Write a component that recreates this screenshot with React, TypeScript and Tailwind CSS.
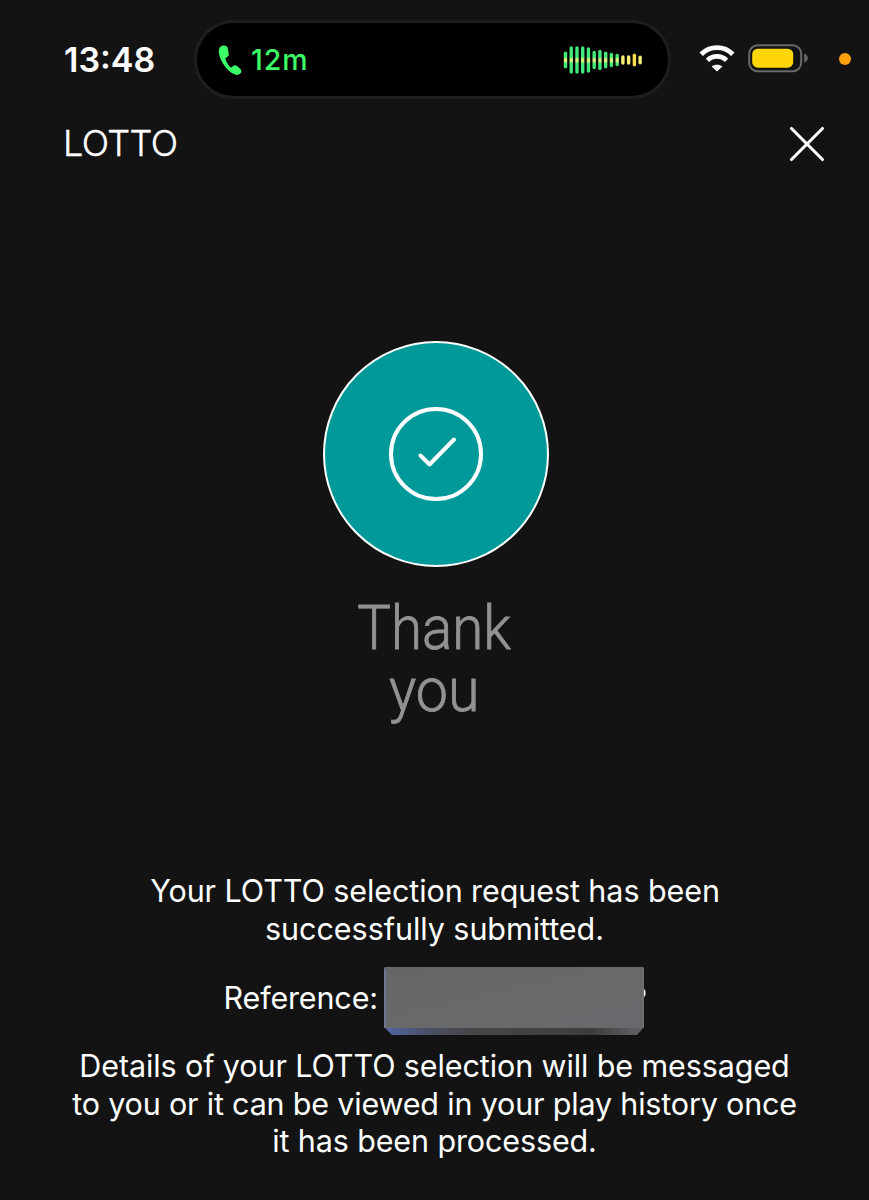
import React from 'react';

const bars = [17, 27.5, 27.5, 27.5, 25.5, 18.5, 20.5, 17, 14.5, 12.5, 9.5, 9.5, 13, 9];

function Waveform() {
  return (
    <svg className="block h-[30px] w-[80px] shrink-0" viewBox="0 0 80 30">
      <defs>
        <linearGradient id="wave" gradientUnits="userSpaceOnUse" x1="0" y1="0" x2="0" y2="30">
          <stop offset="0.41" stopColor="#42e87a" />
          <stop offset="0.46" stopColor="#d2f27c" />
          <stop offset="0.56" stopColor="#d2f27c" />
          <stop offset="0.61" stopColor="#42e87a" />
        </linearGradient>
      </defs>
      {bars.map((h, i) => (
        <rect
          key={i}
          x={0.8 + i * 5.74}
          y={15 - h / 2}
          width={3.4}
          height={h}
          rx={1.7}
          fill={i < 10 ? 'url(#wave)' : i === 12 ? '#f8dc4e' : '#f5ee72'}
        />
      ))}
    </svg>
  );
}

function StatusBar() {
  return (
    <div className="flex h-[118px] items-start">
      <div className="w-[194px] shrink-0 pt-[40px] pl-[64px] text-[34px] leading-[40px] font-semibold whitespace-nowrap">
        13:48
      </div>
      <div className="mt-[20px] flex h-[79px] w-[477px] shrink-0 items-center rounded-full border-[3px] border-[#1e1e1e] bg-black pr-[25px] pl-[21px]">
        <svg className="block h-[32px] w-[24px] shrink-0" viewBox="0 0 24 32">
          <path
            d="M5.9 1.5C2.8 1.4.9 3.8.8 7.1.9 12.2 3.6 18.5 8.2 24c3.6 4.2 7.6 6.8 10.8 6.9 2.3 0 3.8-1.2 4.3-2.8.4-1.2-.1-2.3-1-3.1l-3.3-3c-1.2-1-2.6-1-3.7 0l-1.3 1.1c-.7.6-1.3.6-2-.1-1.8-2-3.5-5-4.4-7.5-.3-.9-.1-1.4.6-1.9l1.4-.9c1.1-.8 1.4-1.8 1.1-3.2L9.8 4.3C9.400 2.400 8.100 1.500 5.900 1.500Z"
            fill="#3cff68"
          />
        </svg>
        <span className="ml-[9px] text-[28.500px] leading-[36px] font-medium tracking-[0.9px] text-[#3cff68]">12m</span>
        <div className="flex-1" />
        <Waveform />
      </div>
      <svg className="mt-[43px] ml-[28px] block h-[30px] w-[37px] shrink-0" viewBox="0 0 37 30" fill="none">
        <path d="M2.200 11.300A22 22 0 0 1 33.800 11.300" stroke="#fff" strokeWidth="4.900" />
        <path d="M8.500 17.400A13.400 13.400 0 0 1 27.500 17.400" stroke="#fff" strokeWidth="4.800" />
        <path d="M18 28.400l-5.400-5C15.600 21.200 20.400 21.200 23.400 23.400Z" fill="#fff" />
      </svg>
      <svg className="mt-[43px] ml-[12px] block h-[30px] w-[61px] shrink-0" viewBox="0 0 61 30">
        <rect x="1.2" y="2.200" width="52" height="26" rx="8.500" fill="none" stroke="#68686b" strokeWidth="2" />
        <rect x="4.200" y="5.700" width="41" height="19" rx="5.500" fill="#ffd60a" />
        <path d="M56.200 10.500c2.200 1 3.600 2.500 3.600 4.500s-1.400 3.700-3.600 4.700Z" fill="#68686b" />
      </svg>
      <div className="mt-[53px] ml-[30px] h-[12px] w-[12px] shrink-0 rounded-full bg-[#ff9f0a]" />
    </div>
  );
}

function Line({ children, className }: { children: React.ReactNode; className: string }) {
  return <span className={`block whitespace-nowrap ${className}`}>{children}</span>;
}

export default function App() {
  return (
    <main className="flex h-[1200px] w-[869px] flex-col overflow-hidden bg-[#131313] font-['Inter',sans-serif] text-white">
      <StatusBar />

      <header className="flex h-[52px] items-center justify-between pr-[44px] pl-[63px]">
        <h1 className="pb-[1px] text-[36px] leading-[51px] font-light tracking-[-0.6px] [-webkit-text-stroke:0.4px_#fff]">LOTTO</h1>
        <button aria-label="Close" className="block">
          <svg className="block h-[36px] w-[36px]" viewBox="0 0 36 36">
            <path d="M2.500 2.500l31 31M33.500 2.500l-31 31" stroke="#fff" strokeWidth="3.100" strokeLinecap="round" />
          </svg>
        </button>
      </header>

      <div className="mt-[170px] flex justify-center pl-[3px]">
        <svg className="block h-[228px] w-[228px]" viewBox="0 0 228 228" fill="none">
          <circle cx="114" cy="114" r="112" fill="#009999" stroke="#fff" strokeWidth="2" />
          <circle cx="114" cy="114" r="45" stroke="#fff" strokeWidth="4" />
          <path d="M98.500 115.500l9 9L132 99.500" stroke="#fff" strokeWidth="4" strokeLinecap="round" strokeLinejoin="round" />
        </svg>
      </div>

      <h2 className="mt-[30px] flex h-[133px] flex-col items-center text-center font-['Roboto',sans-serif] text-[61px] leading-[61.500px] font-light text-[#929292] [-webkit-text-stroke:0.8px_#929292]">
        <Line className="scale-x-[0.925]">Thank</Line>
        <Line className="scale-x-[0.94]">you</Line>
      </h2>

      <div className="mt-[141px] flex flex-col items-center text-[30.500px] leading-[37.500px]">
        <p className="flex flex-col items-center">
          <Line className="pl-[1px] tracking-[-0.08px]">Your LOTTO selection request has been</Line>
          <Line className="tracking-[-0.05px]">successfully submitted.</Line>
        </p>
        <div className="mt-[18px] flex h-[70px] w-[422px] items-center">
          <span className="w-[160px] shrink-0 pb-[5px] tracking-[-0.15px] whitespace-nowrap">Reference:</span>
          <svg className="block h-[70px] w-[263px] shrink-0" viewBox="0 0 263 70">
            <defs>
              <linearGradient id="plate" x1="0" y1="0" x2="1" y2="1">
                <stop offset="0" stopColor="#666668" />
                <stop offset="0.5" stopColor="#69696b" />
                <stop offset="1" stopColor="#68696c" />
              </linearGradient>
              <linearGradient id="bevel" x1="0" y1="0" x2="1" y2="0">
                <stop offset="0" stopColor="#5365a8" />
                <stop offset="0.17" stopColor="#4b4f63" />
                <stop offset="0.35" stopColor="#464647" />
                <stop offset="0.8" stopColor="#3d3d3e" />
                <stop offset="1" stopColor="#646466" />
              </linearGradient>
              <linearGradient id="rim" x1="0" y1="0" x2="1" y2="0">
                <stop offset="0" stopColor="#7384b5" />
                <stop offset="0.2" stopColor="#828285" />
                <stop offset="1" stopColor="#78787a" />
              </linearGradient>
            </defs>
            <ellipse cx="259.500" cy="28" rx="2" ry="4" fill="#fff" />
            <path d="M0 4Q0 2 2 2H258Q260 2 260 4V62L253 70H8L0 62Z" fill="url(#bevel)" />
            <path d="M0 4Q0 2 2 2H258Q260 2 260 4V63H0Z" fill="url(#plate)" />
            <path d="M1 2.700H259" stroke="url(#rim)" strokeWidth="1.400" />
            <path d="M1 4V62" stroke="#707ba0" strokeWidth="1.500" />
            <path d="M259.300 4V62" stroke="#77777a" strokeWidth="1" />
          </svg>
        </div>
        <p className="mt-[12px] flex flex-col items-center">
          <Line className="tracking-[-0.1px]">Details of your LOTTO selection will be messaged</Line>
          <Line className="tracking-[-0.18px]">to you or it can be viewed in your play history once</Line>
          <Line className="tracking-[-0.12px]">it has been processed.</Line>
        </p>
      </div>
    </main>
  );
}
